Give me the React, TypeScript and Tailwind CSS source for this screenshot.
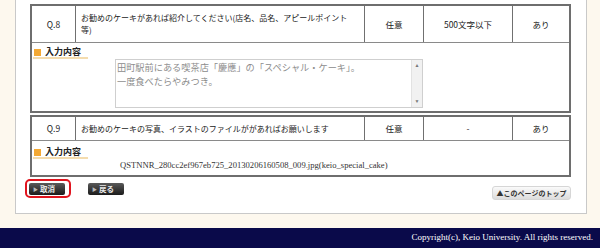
import React from 'react';

const JP = "font-['Noto_Sans_CJK_JP','Noto_Sans_CJK_SC',sans-serif]";
const SERIF = "font-['Liberation_Serif','Noto_Serif',serif]";

function InputLabel() {
  return (
    <div className="flex items-center gap-[4px] w-[55px] h-[12px] ml-[1px] border-b-2 border-[#f4dcae]">
      <span className="block w-[7px] h-[7px] ml-[1px] bg-[#f4a934]" />
      <span className={`${JP} text-[9px] leading-[10px] font-bold text-[#222]`}>入力内容</span>
    </div>
  );
}

function HeadRow({ no, question, required, limit, rule, tall }: { no: string; question: React.ReactNode; required: string; limit: string; rule: string; tall?: boolean }) {
  const cell = `flex items-center justify-center border-r border-[#707070] ${JP} text-[8.5px] text-[#222]`;
  return (
    <div className={`flex border-b border-[#8a8a8a] ${tall ? 'h-[37px]' : 'h-[24px]'}`}>
      <div className={`${cell} w-[44px]`}>{no}</div>
      <div className={`flex items-center w-[289px] border-r border-[#707070] px-[5px] ${JP} text-[8px] leading-[12px] text-[#222]`}>
        <div>{question}</div>
      </div>
      <div className={`${cell} w-[59px]`}>{required}</div>
      <div className={`${cell} w-[89px]`}>{limit}</div>
      <div className={`flex flex-1 items-center justify-center ${JP} text-[8.5px] text-[#222]`}>{rule}</div>
    </div>
  );
}

export default function App() {
  return (
    <div className="w-[600px] h-[248px] bg-[#fdf8ee] flex flex-col overflow-hidden">
      <div className="flex-1 flex">
        <div className="ml-[15px] w-[572px] h-[214px] bg-white border-x border-b border-[#c9c9c9] pl-[14px] pt-[4px]">
          {/* Q.8 */}
          <div className="w-[541px] border-2 border-[#6e6e6e]">
            <HeadRow
              tall
              no="Q.8"
              question={<>お勧めのケーキがあれば紹介してください(店名、品名、アピールポイント<br />等)</>}
              required="任意"
              limit="500文字以下"
              rule="あり"
            />
            <div className="h-[68px] pt-[4px]">
              <InputLabel />
              <div className="ml-[83px] w-[308px] h-[49px] border border-[#cfcfcf] flex">
                <div className={`flex-1 px-[1px] ${JP} text-[9.2px] leading-[14px] text-[#8c8c8c]`}>
                  <div>田町駅前にある喫茶店「慶應」の「スペシャル・ケーキ」。</div>
                  <div>一度食べたらやみつき。</div>
                </div>
                <div className="w-[11px] bg-[#f1f1f1] border-l border-[#e2e2e2] flex flex-col items-center justify-between py-[3px] text-[5px] leading-[5px] text-[#777]">
                  <span>▲</span>
                  <span>▼</span>
                </div>
              </div>
            </div>
          </div>

          {/* Q.9 */}
          <div className="w-[541px] mt-[2px] border-2 border-[#6e6e6e]">
            <HeadRow
              no="Q.9"
              question="お勧めのケーキの写真、イラストのファイルががあればお願いします"
              required="任意"
              limit="-"
              rule="あり"
            />
            <div className="h-[34px] pt-[6px]">
              <InputLabel />
              <div className={`ml-[88px] mt-[1px] ${SERIF} text-[8.6px] leading-[11px] text-[#333]`}>
                QSTNNR_280cc2ef967eb725_20130206160508_009.jpg(keio_special_cake)
              </div>
            </div>
          </div>

          {/* buttons */}
          <div className="flex items-start w-[541px] mt-[2px]">
            <div className="ml-[-5px] w-[46px] h-[19px] border-2 border-[#e0141e] rounded-[5px] pl-[2px] pt-[2px]">
              <div className={`w-[36px] h-[12px] rounded-[2px] bg-gradient-to-b from-[#5a5a5a] to-[#1c1c1c] flex items-center gap-[2px] pl-[4px] ${JP} text-[7.5px] font-bold text-[#e8e8e8]`}>
                <span className="text-[5px] text-[#bbb]">▶</span>取消
              </div>
            </div>
            <div className={`ml-[17px] mt-[4px] w-[36px] h-[12px] rounded-[2px] bg-gradient-to-b from-[#5a5a5a] to-[#1c1c1c] flex items-center gap-[2px] pl-[4px] ${JP} text-[7.5px] font-bold text-[#e8e8e8]`}>
              <span className="text-[5px] text-[#bbb]">▶</span>戻る
            </div>
            <div className={`ml-auto mt-[7px] w-[79px] h-[14px] rounded-[3px] border border-[#d6d6d6] bg-gradient-to-b from-[#fafafa] to-[#dcdcdc] flex items-center justify-center ${JP} text-[7px] font-bold text-[#333]`}>
              ▲このページのトップ
            </div>
          </div>
        </div>
      </div>
      <div className={`h-[20px] bg-[#0a0a4a] flex items-center justify-end pr-[7px] ${SERIF} text-[9px] text-white`}>
        Copyright(c), Keio University. All rights reserved.
      </div>
    </div>
  );
}
